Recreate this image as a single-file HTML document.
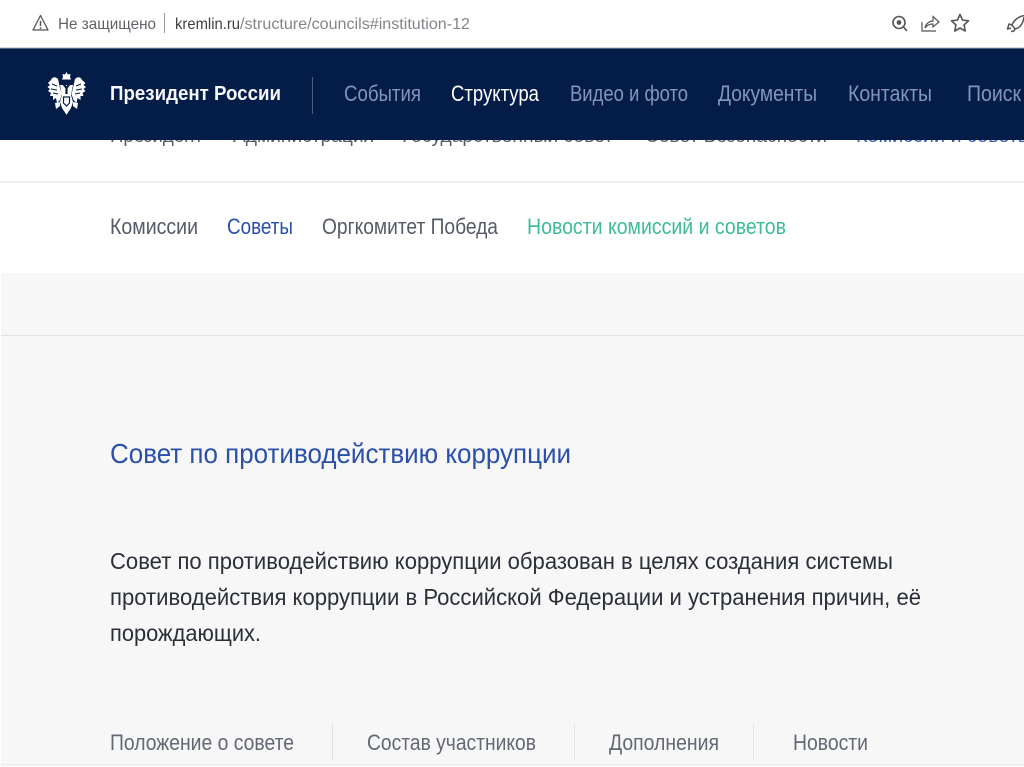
<!DOCTYPE html>
<html lang="ru"><head><meta charset="utf-8"><title>Совет по противодействию коррупции</title>
<style>
html,body{margin:0;padding:0;width:1024px;height:767px;overflow:hidden;background:#f7f7f8}
svg{display:block;position:absolute;left:0;top:0;filter:blur(.3px)}
text{font-family:"Liberation Sans",sans-serif}
</style></head><body>
<svg width="1024" height="767" viewBox="0 0 1024 767" xmlns="http://www.w3.org/2000/svg">
<rect width="1024" height="767" fill="#f7f7f8"/>
<rect y="140" width="1024" height="133" fill="#fff"/>
<rect y="181" width="1024" height="2" fill="#efefef"/>
<rect y="335" width="1024" height="1" fill="#e2e2e3"/>
<rect y="764" width="1024" height="1" fill="#eeeeee"/>
<rect x="0" y="273" width="1" height="494" fill="#fff"/>
<g font-size="19" fill="#555b6a">
<text x="110" y="142" textLength="93" lengthAdjust="spacingAndGlyphs">Президент</text>
<text x="233" y="142" textLength="141" lengthAdjust="spacingAndGlyphs">Администрация</text>
<text x="402" y="142" textLength="211" lengthAdjust="spacingAndGlyphs">Государственный совет</text>
<text x="645" y="142" textLength="182" lengthAdjust="spacingAndGlyphs">Совет Безопасности</text>
<text x="856" y="142" textLength="176" lengthAdjust="spacingAndGlyphs" fill="#3d5ba8">Комиссии и советы</text>
</g>
<rect width="1024" height="48" fill="#fff"/>
<rect y="48" width="1024" height="92" fill="#041c48"/>
<rect y="47.500" width="1024" height="1" fill="#a9b0c4"/>
<g fill="none" stroke="#555" stroke-width="1.300">
<path d="M40.500 15.500 L33 30 H48 Z" stroke-linejoin="round"/>
<path d="M40.500 21 V26 M40.500 27.300 V29" stroke-width="1.500"/>
</g>
<text x="58" y="29" font-size="16" fill="#5f6368" textLength="98" lengthAdjust="spacingAndGlyphs">Не защищено</text>
<rect x="164" y="13" width="1" height="20" fill="#9a9a9a"/>
<text x="175" y="29" font-size="16" fill="#3c4043" textLength="65" lengthAdjust="spacingAndGlyphs">kremlin.ru</text>
<text x="240" y="29" font-size="16" fill="#80868b" textLength="230" lengthAdjust="spacingAndGlyphs">/structure/councils#institution-12</text>
<g fill="none" stroke="#555" stroke-width="1.600">
<circle cx="899" cy="22.500" r="6"/><path d="M903.500 27 L907 31"/><circle cx="899" cy="22.500" r="2.400" fill="#555" stroke="none"/>
<path d="M922 22 V31 H936 M925 28 C926 23 930 21 933 21 V16.500 L939 22 L933 27 V24 C930 24 927 25 925 28 Z" stroke-width="1.200"/>
<path d="M960 14.500 L962.500 20 L968.500 20.800 L964 25 L965.300 31 L960 28 L954.700 31 L956 25 L951.500 20.800 L957.500 20 Z" stroke-linejoin="round"/>
<path d="M1024 15.500 C1018 17 1014 20 1012 25 L1015 29 C1020 28 1023 24 1024 17 M1012 25 L1009 24 L1007.500 29 L1011 28 M1015 29 L1014 31 L1011 31.500" stroke-linejoin="round" stroke-width="1.500"/>
</g>
<g fill="#fff">
<path d="M66.500 72 l1.500 2.500 2.500 -.5 -.5 3 1 2.500 h-9 l1 -2.500 -.5 -3 2.500 .5 Z"/>
<path d="M58 79 C55 76 52 77 51 80 L48 83 L50 85 L47.500 87 L50 89 L48 91 L51 93 L50 96 L53 96 L53 100 L56 98 L57 103 L60 100 L62 94 L60 88 Z"/>
<path d="M75 79 C78 76 81 77 82 80 L85.500 83 L83.500 85 L86 87 L83.500 89 L85.500 91 L82.500 93 L83.500 96 L80.500 96 L80.500 100 L77.500 98 L76.500 103 L73.500 100 L71.500 94 L73 88 Z"/>
<path d="M60 85 L73 85 L71 95 L73 102 L71 108 L67 114 L66.500 115 L66 114 L62 108 L60 102 L62 95 Z"/>
<path d="M55 103 L60 102 L60 106 L56 109 Z M78 103 L73 102 L73 106 L77 109 Z"/>
</g>
<g fill="none" stroke="#041c48">
<path d="M60.500 80 L66.500 88 L72.500 80 M66.500 88 V94" stroke-width="2.200"/>
<path d="M52 84 L57 86 M51 89 L57 90 M53 93 L58 94 M81 84 L76 86 M82 89 L76 90 M80 93 L75 94" stroke-width="1"/>
<path d="M63.500 97 H69.500 V103 L66.500 106 L63.500 103 Z" stroke-width="1.200"/>
</g>
<text x="110" y="100" font-size="20" font-weight="bold" fill="#f6f7fa" textLength="171" lengthAdjust="spacingAndGlyphs">Президент России</text>
<rect x="312" y="77" width="1" height="37" fill="#4d5d7f"/>
<g font-size="22" fill="#8494bb">
<text x="344" y="101" textLength="77" lengthAdjust="spacingAndGlyphs">События</text>
<text x="451" y="101" textLength="88" lengthAdjust="spacingAndGlyphs" fill="#fff">Структура</text>
<text x="570" y="101" textLength="118" lengthAdjust="spacingAndGlyphs">Видео и фото</text>
<text x="718" y="101" textLength="99" lengthAdjust="spacingAndGlyphs">Документы</text>
<text x="848" y="101" textLength="84" lengthAdjust="spacingAndGlyphs">Контакты</text>
<text x="967" y="101" textLength="54" lengthAdjust="spacingAndGlyphs">Поиск</text>
</g>
<g font-size="22">
<text x="110" y="234" fill="#555b66" textLength="88" lengthAdjust="spacingAndGlyphs">Комиссии</text>
<text x="227" y="234" fill="#2a4ea6" textLength="66" lengthAdjust="spacingAndGlyphs">Советы</text>
<text x="322" y="234" fill="#555b66" textLength="176" lengthAdjust="spacingAndGlyphs">Оргкомитет Победа</text>
<text x="527" y="234" fill="#3dbb9b" textLength="259" lengthAdjust="spacingAndGlyphs">Новости комиссий и советов</text>
</g>
<text x="110" y="463" font-size="28" fill="#2b50a8" textLength="461" lengthAdjust="spacingAndGlyphs">Совет по противодействию коррупции</text>
<g font-size="23" fill="#2a2f38">
<text x="110" y="569" textLength="783" lengthAdjust="spacingAndGlyphs">Совет по противодействию коррупции образован в целях создания системы</text>
<text x="110" y="605" textLength="811" lengthAdjust="spacingAndGlyphs">противодействия коррупции в Российской Федерации и устранения причин, её</text>
<text x="110" y="641" textLength="151" lengthAdjust="spacingAndGlyphs">порождающих.</text>
</g>
<g font-size="22" fill="#626874">
<text x="110" y="750" textLength="184" lengthAdjust="spacingAndGlyphs">Положение о совете</text>
<text x="367" y="750" textLength="169" lengthAdjust="spacingAndGlyphs">Состав участников</text>
<text x="609" y="750" textLength="110" lengthAdjust="spacingAndGlyphs">Дополнения</text>
<text x="793" y="750" textLength="75" lengthAdjust="spacingAndGlyphs">Новости</text>
</g>
<rect x="332" y="723" width="1" height="37" fill="#e0e0e2"/>
<rect x="574" y="723" width="1" height="37" fill="#e6e6e8"/>
<rect x="753" y="723" width="1" height="37" fill="#e6e6e8"/>
</svg>
</body></html>
